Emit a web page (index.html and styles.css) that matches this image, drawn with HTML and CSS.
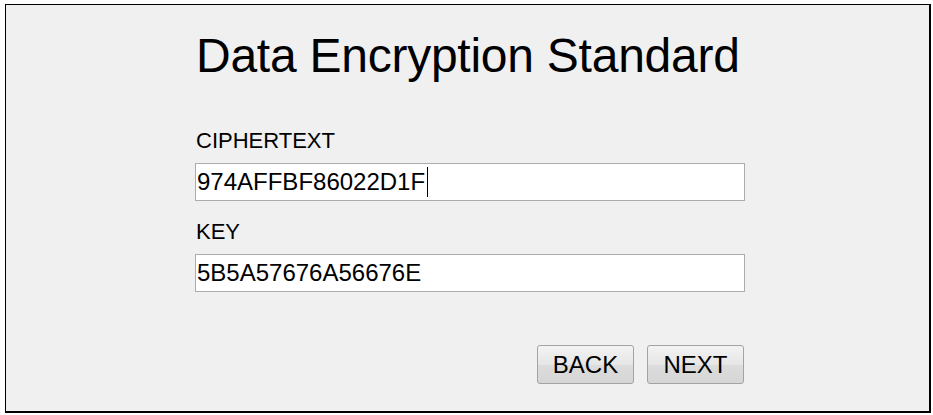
FILE: index.html
```html
<!DOCTYPE html>
<html>
<head>
<meta charset="utf-8">
<link rel="stylesheet" href="styles.css">
</head>
<body>
<div class="window">
  <div class="content">
    <h1 class="title">Data Encryption Standard</h1>
    <label class="label label-first">CIPHERTEXT</label>
    <div class="field"><span class="value">974AFFBF86022D1F</span><span class="caret"></span></div>
    <label class="label label-next">KEY</label>
    <div class="field"><span class="value">5B5A57676A56676E</span></div>
    <div class="actions">
      <button class="btn">BACK</button>
      <button class="btn">NEXT</button>
    </div>
  </div>
</div>
</body>
</html>
```
FILE: styles.css
```css
html, body {
  margin: 0;
  padding: 0;
  background: #ffffff;
}
body {
  font-family: "Liberation Sans", Arial, sans-serif;
  color: #000;
}
.window {
  margin: 4px 0 0 5px;
  width: 926px;
  height: 409px;
  box-sizing: border-box;
  border-top: 1px solid #000;
  border-left: 1px solid #000;
  border-right: 2px solid #000;
  border-bottom: 2px solid #000;
  background: #f0f0f0;
  display: flex;
  justify-content: flex-start;
}
.content {
  margin-left: 189px;
  width: 550px;
  display: flex;
  flex-direction: column;
}
.title {
  margin: 23px 0 0 1px;
  font-size: 48px;
  font-weight: normal;
  line-height: 56px;
  letter-spacing: -0.25px;
  white-space: nowrap;
}
.label {
  display: block;
  margin-left: 1px;
  font-size: 22px;
  line-height: 26px;
}
.label-first {
  margin-top: 44px;
}
.label-next {
  margin-top: 18px;
}
.field {
  margin-top: 9px;
  height: 38px;
  box-sizing: border-box;
  border: 1px solid #acacac;
  background: #fff;
  display: flex;
  align-items: center;
  padding-left: 1px;
  font-size: 24px;
}
.value {
  line-height: 28px;
}
.caret {
  display: inline-block;
  width: 1px;
  height: 30px;
  background: #000;
  margin-left: 2px;
}
.actions {
  margin-top: 53px;
  padding-right: 1px;
  display: flex;
  justify-content: flex-end;
  gap: 13px;
}
.btn {
  width: 97px;
  height: 39px;
  font-family: "Liberation Sans", Arial, sans-serif;
  font-size: 24px;
  color: #000;
  border: 1px solid #a3a3a3;
  border-radius: 3px;
  background: linear-gradient(#f3f3f3, #e6e6e6 50%, #dcdcdc 51%, #d6d6d6);
  padding: 0;
}
```
